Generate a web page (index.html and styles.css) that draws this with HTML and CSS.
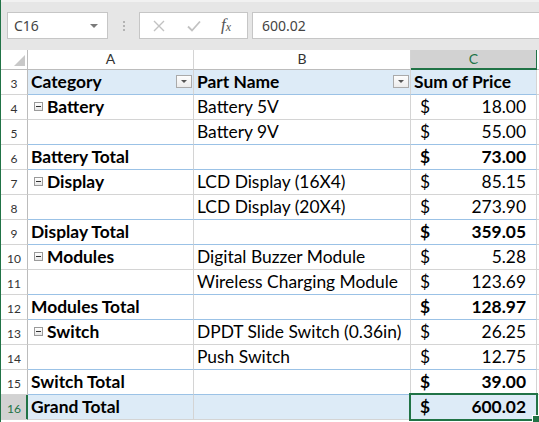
FILE: index.html
```html
<!DOCTYPE html>
<html lang="en">
<head>
  <meta charset="utf-8">
  <title>Parts pivot</title>
  <link rel="stylesheet" href="styles.css">
</head>
<body>
<div class="window">
  <div class="formula-bar">
    <div class="name-box">C16<span class="caret"></span></div>
    <div class="grip"><i></i><i></i><i></i></div>
    <div class="fx-box">
      <svg class="cancel" width="12" height="12" viewBox="0 0 12 12"><path d="M1 1L11 11M11 1L1 11" stroke="#c2c2c2" stroke-width="1.4" fill="none"/></svg>
      <svg class="enter" width="14" height="12" viewBox="0 0 14 12"><path d="M1 6.5L5 10.5L13 1.5" stroke="#c2c2c2" stroke-width="1.8" fill="none"/></svg>
      <span class="fx">f<sub>x</sub></span>
    </div>
    <div class="formula">600.02</div>
  </div>

  <table class="sheet">
    <colgroup>
      <col class="c-rh"><col class="c-a"><col class="c-b"><col class="c-c"><col class="c-d">
    </colgroup>
    <tr class="col-heads">
      <th class="corner"><span class="tri"></span></th>
      <th>A</th>
      <th>B</th>
      <th class="sel">C</th>
      <th></th>
    </tr>
    <tr class="pv-head">
      <th>3</th>
      <td><div class="hd">Category<span class="dd"></span></div></td>
      <td><div class="hd">Part Name<span class="dd"></span></div></td>
      <td>Sum of Price</td>
      <td class="blank"></td>
    </tr>
    <tr>
      <th>4</th>
      <td class="grp"><span class="minus"></span>Battery</td>
      <td>Battery 5V</td>
      <td class="num"><div class="acct"><span>$</span><span>18.00</span></div></td>
      <td class="blank"></td>
    </tr>
    <tr class="pre-total">
      <th>5</th>
      <td></td>
      <td>Battery 9V</td>
      <td class="num"><div class="acct"><span>$</span><span>55.00</span></div></td>
      <td class="blank"></td>
    </tr>
    <tr class="total">
      <th>6</th>
      <td>Battery Total</td>
      <td></td>
      <td class="num"><div class="acct"><span>$</span><span>73.00</span></div></td>
      <td class="blank"></td>
    </tr>
    <tr>
      <th>7</th>
      <td class="grp"><span class="minus"></span>Display</td>
      <td>LCD Display (16X4)</td>
      <td class="num"><div class="acct"><span>$</span><span>85.15</span></div></td>
      <td class="blank"></td>
    </tr>
    <tr class="pre-total">
      <th>8</th>
      <td></td>
      <td>LCD Display (20X4)</td>
      <td class="num"><div class="acct"><span>$</span><span>273.90</span></div></td>
      <td class="blank"></td>
    </tr>
    <tr class="total">
      <th>9</th>
      <td>Display Total</td>
      <td></td>
      <td class="num"><div class="acct"><span>$</span><span>359.05</span></div></td>
      <td class="blank"></td>
    </tr>
    <tr>
      <th>10</th>
      <td class="grp"><span class="minus"></span>Modules</td>
      <td>Digital Buzzer Module</td>
      <td class="num"><div class="acct"><span>$</span><span>5.28</span></div></td>
      <td class="blank"></td>
    </tr>
    <tr class="pre-total">
      <th>11</th>
      <td></td>
      <td>Wireless Charging Module</td>
      <td class="num"><div class="acct"><span>$</span><span>123.69</span></div></td>
      <td class="blank"></td>
    </tr>
    <tr class="total">
      <th>12</th>
      <td>Modules Total</td>
      <td></td>
      <td class="num"><div class="acct"><span>$</span><span>128.97</span></div></td>
      <td class="blank"></td>
    </tr>
    <tr>
      <th>13</th>
      <td class="grp"><span class="minus"></span>Switch</td>
      <td>DPDT Slide Switch (0.36in)</td>
      <td class="num"><div class="acct"><span>$</span><span>26.25</span></div></td>
      <td class="blank"></td>
    </tr>
    <tr class="pre-total">
      <th>14</th>
      <td></td>
      <td>Push Switch</td>
      <td class="num"><div class="acct"><span>$</span><span>12.75</span></div></td>
      <td class="blank"></td>
    </tr>
    <tr class="total">
      <th>15</th>
      <td>Switch Total</td>
      <td></td>
      <td class="num"><div class="acct"><span>$</span><span>39.00</span></div></td>
      <td class="blank"></td>
    </tr>
    <tr class="grand">
      <th class="sel">16</th>
      <td>Grand Total</td>
      <td></td>
      <td class="num active"><div class="acct"><span>$</span><span>600.02</span></div></td>
      <td class="blank"></td>
    </tr>
  </table>
</div>
</body>
</html>
```

FILE: styles.css
```css
*
{
  box-sizing: border-box;
}
body
{
  margin: 0;
  background: #fff;
  font-family: Lato, "Liberation Sans", sans-serif;
  color: #000;
}
.window
{
  width: 539px;
  height: 422px;
  overflow: hidden;
  border-left: 1px solid #217346;
}

/* formula bar */
.formula-bar
{
  display: flex;
  align-items: flex-start;
  height: 50px;
  padding: 10px 0 0 6px;
  background: #e6e6e6;
  border-top: 2px solid #f1f1f1;
}
.name-box
{
  display: flex;
  align-items: center;
  justify-content: space-between;
  width: 101px;
  height: 27px;
  padding: 0 6px 0 6px;
  background: #fff;
  border: 1px solid #c6c6c6;
  font-family: "Noto Sans", "Liberation Sans", sans-serif;
  font-size: 14px;
  color: #444;
}
.caret
{
  width: 0;
  height: 0;
  margin-right: 3px;
  border-left: 4px solid transparent;
  border-right: 4px solid transparent;
  border-top: 4px solid #7a7a7a;
}
.grip
{
  display: flex;
  flex-direction: column;
  align-items: center;
  gap: 2px;
  width: 31px;
  padding-top: 9px;
}
.grip i
{
  width: 2px;
  height: 2px;
  background: #b3b3b3;
}
.fx-box
{
  display: flex;
  align-items: center;
  width: 109px;
  height: 27px;
  background: #fff;
  border: 1px solid #c6c6c6;
}
.cancel
{
  margin-left: 13px;
}
.enter
{
  margin-left: 22px;
}
.fx
{
  margin-left: 20px;
  font-family: "Liberation Serif", serif;
  font-style: italic;
  font-size: 17px;
  line-height: 20px;
  color: #555;
}
.fx sub
{
  font-size: 12px;
  vertical-align: -1px;
}
.formula
{
  flex: 1;
  height: 27px;
  margin-left: 4px;
  margin-right: -4px;
  padding-left: 9px;
  line-height: 25px;
  background: #fff;
  border: 1px solid #c6c6c6;
  font-family: "Noto Sans", "Liberation Sans", sans-serif;
  font-size: 14px;
  color: #444;
}

/* grid */
.sheet
{
  table-layout: fixed;
  border-collapse: separate;
  border-spacing: 0;
  width: 568px;
}
.c-rh { width: 27px; }
.c-a { width: 166px; }
.c-b { width: 217px; }
.c-c { width: 126px; }
.c-d { width: 32px; }
.sheet td, .sheet th
{
  height: 25px;
  padding: 0 3px 2px 3px;
  border-right: 1px solid #d4d4d4;
  border-bottom: 1px solid #d4d4d4;
  vertical-align: bottom;
  white-space: nowrap;
  font-size: 17.4px;
  line-height: 20px;
  text-align: left;
  font-weight: normal;
}
.sheet th
{
  padding: 0 0 3px 0;
  text-align: center;
  font-size: 12px;
  line-height: 14px;
  color: #333;
  border-right-color: #bcbcbc;
}
.sheet .col-heads th
{
  height: 20px;
  padding: 0 0 2px 0;
  font-size: 14px;
  line-height: 16px;
  border-bottom-color: #bcbcbc;
  border-right-color: #d4d4d4;
}
.sheet .col-heads th.corner
{
  position: relative;
  border-right-color: #bcbcbc;
}
.tri
{
  position: absolute;
  right: 2px;
  bottom: 3px;
  width: 0;
  height: 0;
  border-left: 11px solid transparent;
  border-bottom: 11px solid #c8c8c8;
}
.sheet th.sel
{
  background: #d2d2d2;
  color: #217346;
}
.sheet .col-heads th.sel
{
  border-bottom-color: #217346;
  box-shadow: inset 0 -1px 0 #217346;
}
.sheet tr th.sel
{
  border-right-color: #217346;
  box-shadow: inset -1px 0 0 #217346;
}

/* pivot styling */
.sheet .pv-head td
{
  background: #ddebf7;
  border-bottom-color: #9bc2e6;
  font-weight: bold;
}
.sheet .pv-head td.blank, .sheet .grand td.blank
{
  background: #fff;
  border-bottom-color: #d4d4d4;
}
.hd
{
  display: flex;
  align-items: center;
  justify-content: space-between;
}
.dd
{
  position: relative;
  width: 16px;
  height: 13px;
  margin-right: -2px;
  margin-bottom: 2px;
  background: linear-gradient(#fdfdfd, #ececec);
  border: 1px solid #aaa;
}
.dd::after
{
  content: "";
  position: absolute;
  left: 4px;
  top: 4px;
  border-left: 3px solid transparent;
  border-right: 3px solid transparent;
  border-top: 3px solid #555;
}
.sheet td.grp
{
  font-weight: bold;
}
.minus
{
  display: inline-block;
  position: relative;
  width: 9px;
  height: 9px;
  margin: 0 4px 0 3px;
  vertical-align: 2px;
  background: linear-gradient(#fff, #e8e8e8);
  border: 1px solid #9a9a9a;
}
.minus::after
{
  content: "";
  position: absolute;
  left: 1px;
  top: 3px;
  width: 5px;
  height: 1px;
  background: #333;
}
.sheet .pre-total td, .sheet .total td
{
  border-bottom-color: #9bc2e6;
}
.sheet .pre-total td.blank, .sheet .total td.blank
{
  border-bottom-color: #d4d4d4;
}
.sheet .total td, .sheet .grand td
{
  font-weight: bold;
}
.sheet .grand td
{
  background: #ddebf7;
}
.sheet td.num
{
  padding: 0 0 2px 0;
}
.acct
{
  display: flex;
  justify-content: space-between;
  padding: 0 10px 0 9px;
}
.active
{
  position: relative;
}
.active::before
{
  content: "";
  position: absolute;
  top: -2px;
  left: -2px;
  right: -2px;
  bottom: -2px;
  border: 2px solid #217346;
}
.active::after
{
  content: "";
  position: absolute;
  right: -4px;
  bottom: -4px;
  width: 6px;
  height: 6px;
  background: #217346;
  border: 1px solid #fff;
}
```
